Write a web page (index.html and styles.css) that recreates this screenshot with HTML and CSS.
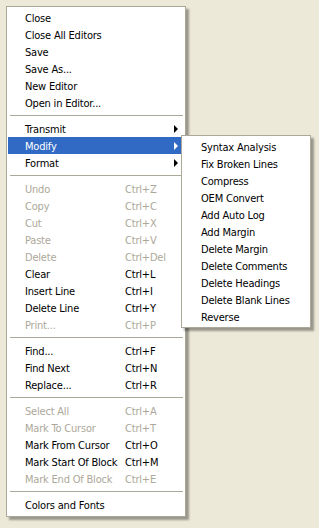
FILE: index.html
```html
<!DOCTYPE html>
<html lang="en">
<head>
    <meta charset="UTF-8">
    <meta name="viewport" content="width=device-width, initial-scale=1.0">
    <title>Editor Menu</title>
    <link rel="stylesheet" href="styles.css">
</head>
<body>
    <ul class="menu main-menu">
        <li class="item"><span class="label">Close</span></li>
        <li class="item"><span class="label">Close All Editors</span></li>
        <li class="item"><span class="label">Save</span></li>
        <li class="item"><span class="label">Save As...</span></li>
        <li class="item"><span class="label">New Editor</span></li>
        <li class="item"><span class="label">Open in Editor...</span></li>
        <li class="sep"></li>
        <li class="item sub"><span class="label">Transmit</span><span class="arrow"></span></li>
        <li class="item sub active"><span class="label">Modify</span><span class="arrow"></span>
            <ul class="menu submenu">
                <li class="item"><span class="label">Syntax Analysis</span></li>
                <li class="item"><span class="label">Fix Broken Lines</span></li>
                <li class="item"><span class="label">Compress</span></li>
                <li class="item"><span class="label">OEM Convert</span></li>
                <li class="item"><span class="label">Add Auto Log</span></li>
                <li class="item"><span class="label">Add Margin</span></li>
                <li class="item"><span class="label">Delete Margin</span></li>
                <li class="item"><span class="label">Delete Comments</span></li>
                <li class="item"><span class="label">Delete Headings</span></li>
                <li class="item"><span class="label">Delete Blank Lines</span></li>
                <li class="item"><span class="label">Reverse</span></li>
            </ul>
        </li>
        <li class="item sub"><span class="label">Format</span><span class="arrow"></span></li>
        <li class="sep"></li>
        <li class="item disabled"><span class="label">Undo</span><span class="key">Ctrl+Z</span></li>
        <li class="item disabled"><span class="label">Copy</span><span class="key">Ctrl+C</span></li>
        <li class="item disabled"><span class="label">Cut</span><span class="key">Ctrl+X</span></li>
        <li class="item disabled"><span class="label">Paste</span><span class="key">Ctrl+V</span></li>
        <li class="item disabled"><span class="label">Delete</span><span class="key">Ctrl+Del</span></li>
        <li class="item"><span class="label">Clear</span><span class="key">Ctrl+L</span></li>
        <li class="item"><span class="label">Insert Line</span><span class="key">Ctrl+I</span></li>
        <li class="item"><span class="label">Delete Line</span><span class="key">Ctrl+Y</span></li>
        <li class="item disabled"><span class="label">Print...</span><span class="key">Ctrl+P</span></li>
        <li class="sep"></li>
        <li class="item"><span class="label">Find...</span><span class="key">Ctrl+F</span></li>
        <li class="item"><span class="label">Find Next</span><span class="key">Ctrl+N</span></li>
        <li class="item"><span class="label">Replace...</span><span class="key">Ctrl+R</span></li>
        <li class="sep"></li>
        <li class="item disabled"><span class="label">Select All</span><span class="key">Ctrl+A</span></li>
        <li class="item disabled"><span class="label">Mark To Cursor</span><span class="key">Ctrl+T</span></li>
        <li class="item"><span class="label">Mark From Cursor</span><span class="key">Ctrl+O</span></li>
        <li class="item"><span class="label">Mark Start Of Block</span><span class="key">Ctrl+M</span></li>
        <li class="item disabled"><span class="label">Mark End Of Block</span><span class="key">Ctrl+E</span></li>
        <li class="sep"></li>
        <li class="item"><span class="label">Colors and Fonts</span></li>
    </ul>
</body>
</html>
```

FILE: styles.css
```css
body {
    margin: 0;
    padding: 6px;
    background-color: #ece9d8;
    font-family: "DejaVu Sans Condensed", "DejaVu Sans", sans-serif;
    font-size: 11px;
    letter-spacing: -0.2px;
    color: #000;
}
.menu {
    list-style: none;
    margin: 0;
    padding: 2px 1px 3px;
    background-color: #fff;
    border: 1px solid #aca899;
    box-shadow: 3px 3px 2px rgba(0, 0, 0, 0.35);
}
.main-menu {
    width: 176px;
}
.item {
    position: relative;
    display: flex;
    align-items: center;
    height: 17px;
    padding-left: 17px;
    padding-top: 1px;
    box-sizing: border-box;
    white-space: nowrap;
}
.label {
    width: 100px;
}
.key {
    flex: 1;
}
.disabled {
    color: #aca899;
}
.sep {
    height: 1px;
    margin: 4px 1px 4px 2px;
    background-color: #aca899;
}
.arrow {
    margin-left: auto;
    margin-right: 6px;
    width: 0;
    height: 0;
    border-top: 4px solid transparent;
    border-bottom: 4px solid transparent;
    border-left: 4px solid #000;
}
.active {
    background-color: #316ac5;
    color: #fff;
}
.active > .arrow {
    border-left-color: #fff;
}
.submenu {
    position: absolute;
    left: 173px;
    top: -2px;
    width: 126px;
    padding-bottom: 2px;
    color: #000;
}
.submenu .item {
    padding-left: 18px;
}
.submenu .label {
    width: auto;
}
```
